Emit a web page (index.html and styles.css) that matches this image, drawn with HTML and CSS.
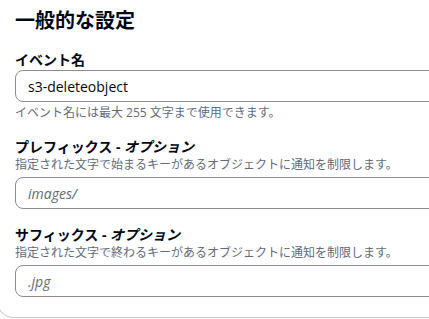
FILE: index.html
```html
<!DOCTYPE html>
<html lang="ja">

<head>
  <meta charset="UTF-8">
  <meta name="viewport" content="width=device-width, initial-scale=1.0">
  <link rel="stylesheet" href="styles.css">
  <title>一般的な設定</title>
</head>

<body>
  <div class="panel">
    <h2 class="panel-title">一般的な設定</h2>

    <div class="field">
      <label class="label" for="event-name">イベント名</label>
      <input class="input" id="event-name" type="text" value="s3-deleteobject">
      <div class="hint">イベント名には最大 255 文字まで使用できます。</div>
    </div>

    <div class="field">
      <label class="label" for="prefix">プレフィックス - <i>オプション</i></label>
      <div class="desc">指定された文字で始まるキーがあるオブジェクトに通知を制限します。</div>
      <input class="input" id="prefix" type="text" placeholder="images/">
    </div>

    <div class="field">
      <label class="label" for="suffix">サフィックス - <i>オプション</i></label>
      <div class="desc">指定された文字で終わるキーがあるオブジェクトに通知を制限します。</div>
      <input class="input" id="suffix" type="text" placeholder=".jpg">
    </div>
  </div>
</body>

</html>
```

FILE: styles.css
```css
html,
body {
  margin: 0;
  height: 100%;
  overflow: hidden;
  background-color: #fff;
}

body {
  font-family: "Open Sans", "Noto Sans CJK JP", sans-serif;
  color: #000716;
}

.panel {
  width: 480px;
  margin-left: -3px;
  margin-top: -20px;
  padding: 28px 0 20px 17px;
  border: 1px solid #c6c6cd;
  border-radius: 16px;
}

.panel-title {
  margin: 0 0 17px;
  font-size: 20px;
  line-height: 24px;
  font-weight: 700;
}

.field {
  display: flex;
  flex-direction: column;
  margin-bottom: 16px;
}

.field:last-child {
  margin-bottom: 0;
}

.label {
  font-size: 14px;
  line-height: 20px;
  font-weight: 700;
}

.label i {
  font-style: italic;
}

.desc {
  font-size: 12px;
  line-height: 16px;
  color: #5f6b7a;
  margin-bottom: 4px;
}

.hint {
  font-size: 12px;
  line-height: 16px;
  color: #5f6b7a;
  margin-top: 3px;
}

.input {
  box-sizing: border-box;
  width: 100%;
  height: 32px;
  padding: 0 12px;
  border: 1px solid #8c8c94;
  border-radius: 8px;
  font-family: inherit;
  font-size: 14px;
  color: #000716;
  background-color: #fff;
  outline: none;
}

.input::placeholder {
  color: #656871;
  font-style: italic;
}
```
